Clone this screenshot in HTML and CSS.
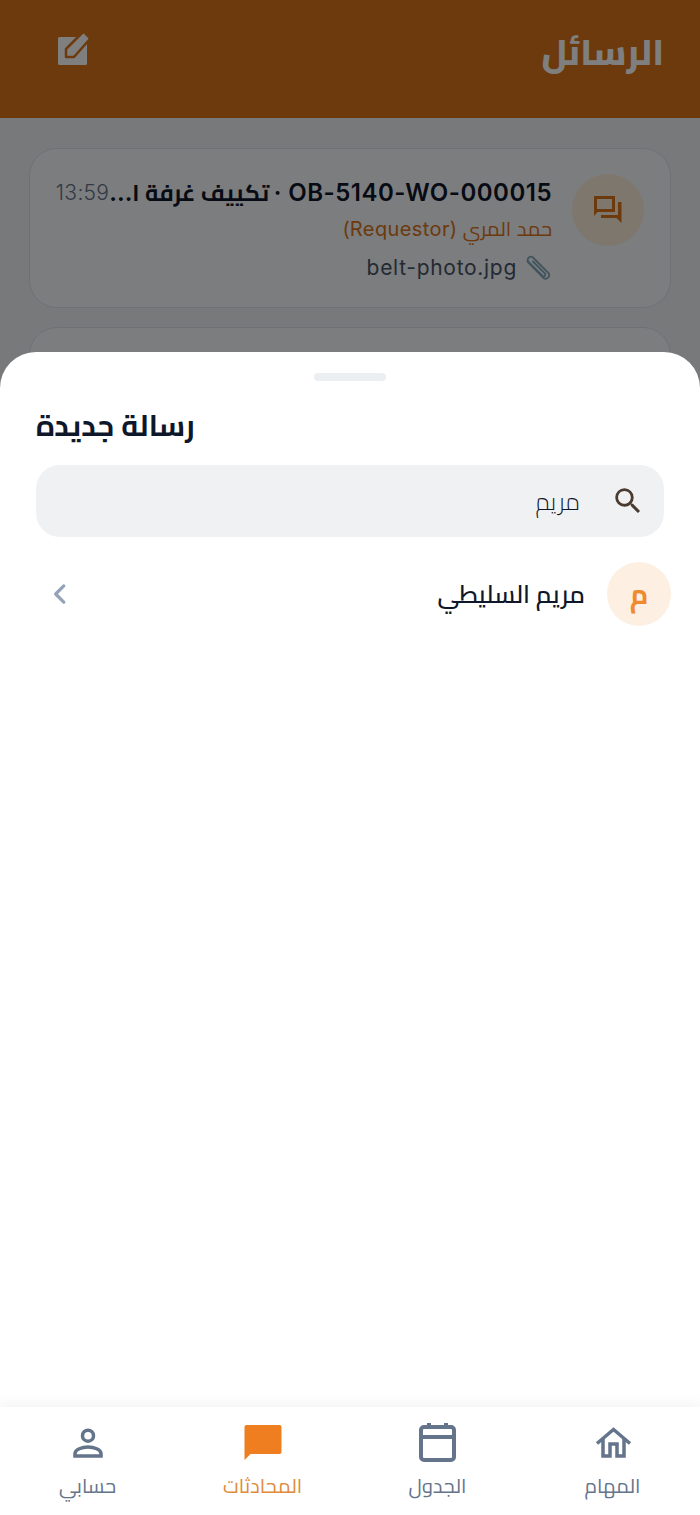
FILE: index.html
```html
<!DOCTYPE html>
<html lang="ar">
<head>
<meta charset="utf-8">
<title>الرسائل</title>
<link rel="stylesheet" href="styles.css">
</head>
<body>
<div class="app">
  <div class="stage">
    <header class="topbar" dir="rtl">
      <h1 class="topbar-title">الرسائل</h1>
      <svg class="compose" viewBox="0 0 34 34" width="34" height="34"><rect class="compose-page" x="1" y="5" width="29" height="28" rx="1.500"/><path class="compose-pen" d="M9 25v-8L25 1a2.200 2.200 0 0 1 3 0l4 4a2.200 2.200 0 0 1 0 3L17 25z"/></svg>
    </header>
    <section class="threads" dir="rtl">
      <article class="thread">
        <div class="thread-avatar">
          <svg viewBox="0 0 30 30" width="30" height="30"><path fill-rule="evenodd" d="M1 1h21v16H4.500L1 21zM4 4v10h15V4zM25 7h3.500v21l-5-5H8v-3h17z"/></svg>
        </div>
        <div class="thread-body">
          <div class="thread-top">
            <span class="thread-title"><span class="code">OB-5140-WO-000015 ·</span> <span class="subject">تكييف غرفة ا...</span></span>
            <span class="thread-time">13:59</span>
          </div>
          <div class="thread-sender">حمد المري (Requestor)</div>
          <div class="thread-file">
            <svg class="clip" viewBox="1 0 26 26" width="26" height="26"><path d="M2.500 6.500 18.500 23a3.600 3.600 0 0 0 5-5L8 2.500a3.200 3.200 0 0 0-4.500 4.500l14 14a1.800 1.800 0 0 0 2.500-2.500L8 6.500"/></svg>
            <span>belt-photo.jpg</span>
          </div>
        </div>
      </article>
      <article class="thread"></article>
    </section>
    <div class="scrim"></div>
    <div class="sheet">
      <div class="handle"></div>
      <h2 class="sheet-title">رسالة جديدة</h2>
      <div class="search" dir="rtl">
        <svg class="search-icon" viewBox="0 0 24 24" width="34" height="34"><path d="M15.500 14h-.79l-.28-.27A6.470 6.470 0 0 0 16 9.500 6.500 6.500 0 1 0 9.500 16c1.610 0 3.090-.59 4.230-1.570l.27.28v.79l5 4.990L20.490 19zm-6 0C7.010 14 5 11.990 5 9.500S7.010 5 9.500 5 14 7.010 14 9.500 11.990 14 9.500 14z"/></svg>
        <span class="search-text">مريم</span>
      </div>
      <div class="person" dir="rtl">
        <div class="person-avatar">م</div>
        <div class="person-name">مريم السليطي</div>
        <svg class="chev" viewBox="0 0 24 24" width="26" height="26"><path d="M15.500 4.500 8 12l7.500 7.500"/></svg>
      </div>
    </div>
  </div>
  <nav class="tabbar" dir="rtl">
    <div class="tab">
      <svg viewBox="0 0 40 40" width="40" height="40"><path class="ln thin" d="M4 20.500 20.500 6.500 37 20.500"/><path class="ln thin" d="M10 16v17h7V21h7v12h7V16"/></svg>
      <span>المهام</span>
    </div>
    <div class="tab">
      <svg viewBox="0 0 40 40" width="40" height="40"><rect class="ln" x="3" y="4" width="33" height="33" rx="3"/><path class="ln" d="M3 14h33M11 0v5M28 0v5"/></svg>
      <span>الجدول</span>
    </div>
    <div class="tab active">
      <svg viewBox="0 0 40 40" width="40" height="40"><path class="fl" d="M1.500 4a2 2 0 0 1 2-2h33a2 2 0 0 1 2 2v25a2 2 0 0 1-2 2H7.500l-6 6z"/></svg>
      <span>المحادثات</span>
    </div>
    <div class="tab">
      <svg viewBox="0 0 40 40" width="40" height="40"><circle class="ln thin" cx="20" cy="12.700" r="5.500"/><path class="ln thin" d="M7 33v-2.500c0-4 7-6.500 13-6.500s13 2.500 13 6.500V33z"/></svg>
      <span>حسابي</span>
    </div>
  </nav>
</div>
</body>
</html>
```
FILE: styles.css
```css
* { box-sizing: border-box; }
html, body { margin: 0; padding: 0; }
body { font-family: Inter, Cairo, "Noto Sans", sans-serif; background: #fff; }
.app { width: 700px; height: 1515px; display: flex; flex-direction: column; overflow: hidden; }
.stage { flex: 1; position: relative; background: #eef2f7; overflow: hidden; }
.topbar { height: 118px; background: #d97518; display: flex; justify-content: space-between; align-items: flex-start; padding: 26px 36px 0 57px; }
.topbar-title { margin: 0; font-size: 36px; line-height: 52px; font-weight: 800; color: #fff; }
.compose { margin-top: 6px; }
.compose-page { fill: #fff; }
.compose-pen { fill: #fff; stroke: #d97518; stroke-width: 2.500; stroke-linejoin: round; }
.threads { padding: 30px 29px; display: flex; flex-direction: column; gap: 19px; }
.thread { height: 160px; border: 1.5px solid #dbe3ec; border-radius: 28px; background: #f8fafc; display: flex; gap: 20px; padding: 25px 26px 0 26px; }
.thread-avatar { width: 72px; height: 72px; flex: none; border-radius: 50%; background: #fdeedd; display: flex; align-items: center; justify-content: center; }
.thread-avatar svg { fill: #d97518; }
.thread-body { flex: 1; min-width: 0; display: flex; flex-direction: column; }
.thread-top { display: flex; justify-content: space-between; align-items: center; height: 36px; }
.thread-title { color: #0f172a; white-space: nowrap; }
.code { font-size: 24px; font-weight: 600; letter-spacing: .5px; }
.subject { font-size: 23px; font-weight: 700; }
.thread-time { font-size: 21px; font-weight: 300; color: #64748b; letter-spacing: .3px; }
.thread-sender { font-size: 20px; line-height: 38px; color: #d97518; letter-spacing: .4px; }
.thread-file { display: flex; align-items: center; gap: 9px; font-size: 21px; line-height: 40px; color: #475569; letter-spacing: .7px; }
.clip { fill: none; stroke: #7fa9b8; stroke-width: 1.800; stroke-linecap: round; }
.scrim { position: absolute; inset: 0; background: rgba(0, 0, 0, .5); }
.sheet { position: absolute; left: 0; right: 0; top: 352px; bottom: 0; background: #fff; border-radius: 36px 36px 0 0; padding: 21px 36px 0; }
.handle { width: 72px; height: 8px; border-radius: 4px; background: #eceff2; margin: 0 auto; }
.sheet-title { margin: 19px 0 0; font-size: 29.300px; line-height: 52px; font-weight: 700; color: #0f172a; text-align: left; }
.search { height: 72px; margin-top: 13px; border-radius: 24px; background: #eff1f3; display: flex; align-items: center; padding: 0 19px; gap: 31px; }
.search-icon { fill: #4b3a2e; flex: none; }
.search-text { font-size: 24px; font-weight: 300; color: #0f172a; }
.person { height: 64px; margin: 25px -7px 0 0; display: flex; align-items: center; gap: 22px; }
.person-avatar { width: 64px; height: 64px; border-radius: 50%; background: #fdf0e2; color: #ef8a2e; font-size: 28px; font-weight: 700; display: flex; align-items: center; justify-content: center; flex: none; }
.person-name { flex: 1; font-size: 24.600px; font-weight: 650; color: #0f172a; }
.chev { fill: none; stroke: #94a3b8; stroke-width: 3; stroke-linecap: round; stroke-linejoin: round; margin-left: 11px; }
.tabbar { height: 108px; flex: none; background: #fff; display: grid; grid-template-columns: repeat(4, 175px); padding-top: 16px; box-shadow: 0 -4px 12px rgba(0, 0, 0, .05); position: relative; }
.tab { display: flex; flex-direction: column; align-items: center; gap: 4px; font-size: 20px; color: #64748b; }
.tab.active { color: #e08a3c; }
.ln { fill: none; stroke: #64748b; stroke-width: 4; }
.thin { stroke-width: 3.500; }
.fl { fill: #ee7e1f; }
```
